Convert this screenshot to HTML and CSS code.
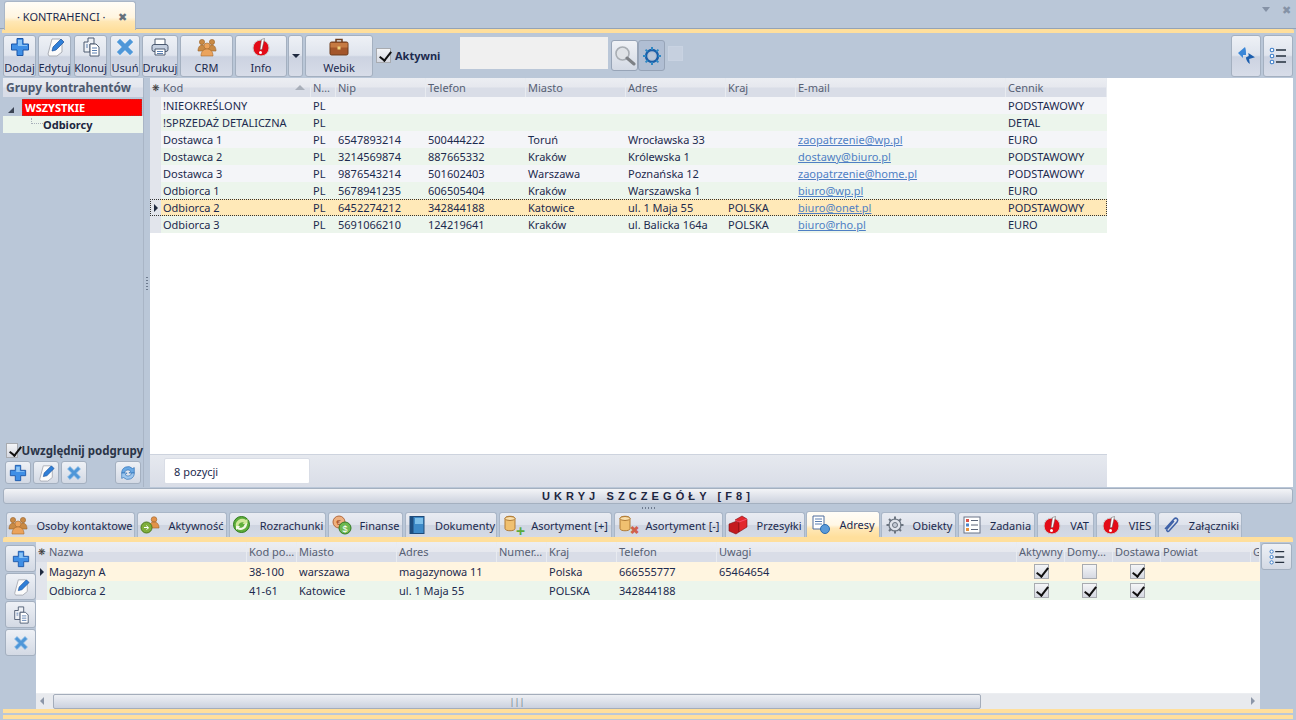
FILE: index.html
```html
<!DOCTYPE html>
<html lang="pl">
<head>
    <meta charset="UTF-8">
    <title>Kontrahenci</title>
    <link rel="stylesheet" href="styles.css">
</head>
<body>
    <svg class="sprites" width="0" height="0">
        <defs>
            <symbol id="i-plus" viewBox="0 0 20 20"><path d="M7 1.5h6v5.500h5.500v6H13v5.500H7V13H1.500V7H7z" fill="#3f8fe6" stroke="#1c57a8"/><path d="M8 3h4v5h5v1H8z" fill="#8cc4f6"/></symbol>
            <symbol id="i-edit" viewBox="0 0 20 20"><path d="M7 2h8l2 2v11l-5 4H4l-1-2z" fill="#fbfbfb" stroke="#a9adb5"/><path d="M7 14l1-4 8-8 3 3-8 8z" fill="#2f7fd8" stroke="#1b4f96" stroke-width=".7"/></symbol>
            <symbol id="i-clone" viewBox="0 0 20 20"><path d="M3 5h4V1h6v6H9v8H3z" fill="#eef1f6" stroke="#4c5a70"/><path d="M9 7h6l3 3v9H9z" fill="#fff" stroke="#4c5a70"/><path d="M11 11h5M11 13.500h5M11 16h5M5 8h2M5 10h2" stroke="#5b7fb0"/></symbol>
            <symbol id="i-del" viewBox="0 0 20 20"><path d="M5 2l5 5 5-5 3 3-5 5 5 5-3 3-5-5-5 5-3-3 5-5-5-5z" fill="#4f97d8" stroke="#7fb6e6" stroke-linejoin="round"/></symbol>
            <symbol id="i-print" viewBox="0 0 20 20"><path d="M5 2h10v6H5z" fill="#fff" stroke="#4c5a70"/><rect x="2" y="7.500" width="16" height="7" rx="2" fill="#c6d0e0" stroke="#4c5a70"/><path d="M5 12h10v6H5z" fill="#fff" stroke="#4c5a70"/><path d="M7 14.500h6M7 16.500h6" stroke="#5b7fb0"/></symbol>
            <symbol id="i-people" viewBox="0 0 20 20"><g fill="#c98a45" stroke="#9a6226" stroke-width=".6"><circle cx="5" cy="5" r="2.600"/><circle cx="15" cy="5" r="2.600"/><path d="M1 14c0-4 2-6 4-6s4 2 4 6zM11 14c0-4 2-6 4-6s4 2 4 6z"/></g><circle cx="10" cy="9" r="3" fill="#eba35c" stroke="#a66a2c" stroke-width=".6"/><path d="M4 19c0-5 3-7 6-7s6 2 6 7z" fill="#eba35c" stroke="#a66a2c" stroke-width=".6"/></symbol>
            <symbol id="i-info" viewBox="0 0 20 20"><circle cx="10" cy="11" r="8" fill="#e30b17" stroke="#c9c9c9"/><path d="M10.500 2.500l3-1-2.500 11-2 .2z" fill="#fff" stroke="#555" stroke-width=".5"/><circle cx="9.500" cy="15.500" r="1.500" fill="#fff"/></symbol>
            <symbol id="i-case" viewBox="0 0 20 20"><path d="M7 5V2.500h6V5" fill="none" stroke="#6d3d1d" stroke-width="1.500"/><rect x="1" y="5" width="18" height="13" rx="1.500" fill="#a4562a" stroke="#6d3d1d"/><path d="M1.500 6h17v4.500h-17z" fill="#c67a42"/><rect x="8.500" y="9.500" width="3" height="3" fill="#f0d27c"/></symbol>
            <symbol id="i-swap" viewBox="0 0 20 20"><path d="M9 1L2 7l5 5V9h3c0-3 0-6-1-8z" fill="#3b87d8"/><path d="M13 18c-2-2-3-4-3-7l3-1V7l6 5-6 1z" fill="#1d5fae" transform="rotate(-8 13 12)"/></symbol>
            <symbol id="i-list" viewBox="0 0 20 20"><g fill="#fff" stroke="#3f7fc8" stroke-width="1.100"><circle cx="4" cy="4" r="1.800"/><circle cx="4" cy="10" r="1.800"/><circle cx="4" cy="16" r="1.800"/></g><path d="M8 4h10M8 10h10M8 16h10" stroke="#25303f" stroke-width="1.400"/></symbol>
            <symbol id="i-sync" viewBox="0 0 20 20"><path d="M3 10a7 7 0 0 1 12-5l2-1v6h-6l2-2a4 4 0 0 0-7 2z" fill="#6aa9e4" stroke="#2b6cb4" stroke-width=".7"/><path d="M17 10a7 7 0 0 1-12 5l-2 1v-6h6l-2 2a4 4 0 0 0 7-2z" fill="#9cc6ee" stroke="#2b6cb4" stroke-width=".7"/></symbol>
            <symbol id="i-search" viewBox="0 0 22 22"><circle cx="8.500" cy="8.500" r="6.500" fill="#dfe2e6" stroke="#a8adb3" stroke-width="1.600"/><path d="M13 13l7 6" stroke="#7d8085" stroke-width="3" stroke-linecap="round"/></symbol>
            <symbol id="i-gear" viewBox="0 0 20 20"><circle cx="10" cy="10" r="6" fill="none" stroke="#1a5ea8" stroke-width="2.400"/><circle cx="10" cy="10" r="3.500" fill="#b9c6d8"/><path d="M10 1v3M10 16v3M1 10h3M16 10h3M3.600 3.600l2 2M14.400 14.400l2 2M16.400 3.600l-2 2M5.600 14.400l-2 2" stroke="#2f88c4" stroke-width="2"/></symbol>
            <symbol id="i-activity" viewBox="0 0 20 20"><circle cx="14" cy="4.500" r="2.800" fill="#e2924a" stroke="#9a6226" stroke-width=".6"/><path d="M9 13c0-4 2-6 5-6s5 2 5 6z" fill="#e2924a" stroke="#9a6226" stroke-width=".6"/><circle cx="6.500" cy="12.500" r="5.500" fill="#7fae3c" stroke="#4d7a1e"/><path d="M4 12.500h4l-1.500-2M9 12.500l-2.500 2" stroke="#fff" fill="none"/></symbol>
            <symbol id="i-money" viewBox="0 0 20 20"><circle cx="9.500" cy="9.500" r="8" fill="#5fae3c" stroke="#2f7a1c"/><path d="M4 12a6.500 6.500 0 0 1 10-7l1.500-1v5h-5l1.500-1.500A4 4 0 0 0 6.500 12z" fill="#cfe89a"/><path d="M15 8a6.500 6.500 0 0 1-10 6l-1 1v-4h4l-1 1.500a4 4 0 0 0 5.500-3z" fill="#f4f8e8"/></symbol>
            <symbol id="i-coins" viewBox="0 0 20 20"><circle cx="7" cy="7" r="6" fill="#eeb080" stroke="#b2683c"/><text x="4.200" y="10" font-size="8" fill="#a04a20" font-family="Liberation Sans">€</text><circle cx="13" cy="13" r="6" fill="#6cb850" stroke="#327a24"/><text x="10.500" y="16.500" font-size="9" fill="#fff" font-family="Liberation Sans">$</text></symbol>
            <symbol id="i-book" viewBox="0 0 20 20"><rect x="3" y="1.500" width="14" height="17" fill="#3d8ac8" stroke="#1f4a78"/><rect x="3" y="1.500" width="3.500" height="17" fill="#1e4e80"/><path d="M8 3h8v6H8z" fill="#7ec0ea"/></symbol>
            <symbol id="i-can" viewBox="0 0 20 20"><path d="M2 3.500c0-3 10-3 10 0v10c0 3-10 3-10 0z" fill="#f0c070" stroke="#b07a34"/><ellipse cx="7" cy="3.500" rx="5" ry="2" fill="#fae0ac" stroke="#b07a34"/></symbol>
            <symbol id="i-box" viewBox="0 0 20 20"><path d="M1 9l8-3 2 1v10l-3 2-7-3z" fill="#c41a1e" stroke="#7d0e12" stroke-width=".6"/><path d="M7 5l7-4 5 3v8l-8 5V7z" fill="#e2282c" stroke="#7d0e12" stroke-width=".6"/><path d="M7 5l4 2 8-3" fill="none" stroke="#f57" stroke-width=".8"/></symbol>
            <symbol id="i-addr" viewBox="0 0 20 20"><path d="M2 1h11v13H2z" fill="#fff" stroke="#4f6c9c"/><path d="M4 4h7M4 6.500h7M4 9h7" stroke="#5b7fb0"/><circle cx="14" cy="14" r="4.500" fill="#5a9ad8" stroke="#2c6cb0"/></symbol>
            <symbol id="i-cog" viewBox="0 0 20 20"><circle cx="10" cy="10" r="6" fill="#dfe3ea" stroke="#6b7480" stroke-width="1.200"/><circle cx="10" cy="10" r="2.500" fill="#c4cbd5" stroke="#6b7480"/><path d="M10 1.500v3M10 15.500v3M1.500 10h3M15.500 10h3M4 4l2 2M14 14l2 2M16 4l-2 2M6 14l-2 2" stroke="#6b7480" stroke-width="2"/></symbol>
            <symbol id="i-task" viewBox="0 0 20 20"><rect x="2" y="2" width="16" height="16" fill="#fff" stroke="#6a7488"/><rect x="4" y="4" width="3" height="3" fill="#d9534a"/><rect x="4" y="8.500" width="3" height="3" fill="#4c86cc"/><rect x="4" y="13" width="3" height="3" fill="#e8923c"/><path d="M9 5.500h7M9 10h7M9 14.500h7" stroke="#5a6478"/></symbol>
            <symbol id="i-clip" viewBox="0 0 20 20"><path d="M4 14L13 4c2-2 5 0 3 3l-8 9c-1 1-3 0-2-2l7-8" fill="none" stroke="#3f62a8" stroke-width="1.500"/></symbol>
        </defs>
    </svg>

    <div class="doc-tabs">
        <div class="doc-tab">
            <span>· KONTRAHENCI ·</span>
            <span class="doc-close">✖</span>
        </div>
        <div class="window-controls">
            <span class="wc-arrow"></span>
            <span class="wc-close">✖</span>
        </div>
    </div>
    <div class="stripe"></div>

    <div class="toolbar">
        <button class="tbtn w33"><svg class="ic"><use href="#i-plus"/></svg>Dodaj</button>
        <button class="tbtn w33 g2"><svg class="ic"><use href="#i-edit"/></svg>Edytuj</button>
        <button class="tbtn w33 g3"><svg class="ic"><use href="#i-clone"/></svg>Klonuj</button>
        <button class="tbtn w30 g3"><svg class="ic"><use href="#i-del"/></svg>Usuń</button>
        <button class="tbtn w36 g2"><svg class="ic"><use href="#i-print"/></svg>Drukuj</button>
        <button class="tbtn w53 g2"><svg class="ic"><use href="#i-people"/></svg>CRM</button>
        <button class="tbtn w52 g2"><svg class="ic"><use href="#i-info"/></svg>Info</button>
        <button class="tbtn w15 g1"><span class="caret"></span></button>
        <button class="tbtn w68 g2"><svg class="ic"><use href="#i-case"/></svg>Webik</button>
        <label class="active-check"><span class="check on"></span>Aktywni</label>
        <div class="search-box"></div>
        <button class="sbtn"><svg class="ic22"><use href="#i-search"/></svg></button>
        <button class="sbtn sbtn-on"><svg class="ic20"><use href="#i-gear"/></svg></button>
        <div class="small-box"></div>
        <div class="toolbar-right">
            <button class="tbtn w30"><svg class="ic"><use href="#i-swap"/></svg></button>
            <button class="tbtn w30"><svg class="ic"><use href="#i-list"/></svg></button>
        </div>
    </div>

    <div class="main">
        <aside class="groups">
            <div class="groups-head">Grupy kontrahentów</div>
            <div class="tree">
                <div class="tree-root"><span class="tree-arrow"></span><span class="tree-sel">WSZYSTKIE</span></div>
                <div class="tree-child"><span class="tree-line"></span>Odbiorcy</div>
            </div>
            <label class="sub-check"><span class="check on"></span>Uwzględnij podgrupy</label>
            <div class="groups-btns">
                <button class="gbtn"><svg class="ic"><use href="#i-plus"/></svg></button>
                <button class="gbtn"><svg class="ic"><use href="#i-edit"/></svg></button>
                <button class="gbtn"><svg class="ic16"><use href="#i-del"/></svg></button>
                <button class="gbtn gbtn-end"><svg class="ic"><use href="#i-sync"/></svg></button>
            </div>
        </aside>
        <div class="vsplit"><span></span></div>
        <section class="grid-top">
            <div class="up-row up-head">
                <div class="hd star">❋</div>
                <div class="hd sort">Kod<span class="sort-arrow"></span></div>
                <div class="hd">N…</div>
                <div class="hd">Nip</div>
                <div class="hd">Telefon</div>
                <div class="hd">Miasto</div>
                <div class="hd">Adres</div>
                <div class="hd">Kraj</div>
                <div class="hd">E-mail</div>
                <div class="hd">Cennik</div>
            </div>
            <div class="up-row"><div class="rh"></div><div>!NIEOKREŚLONY</div><div>PL</div><div></div><div></div><div></div><div></div><div></div><div></div><div>PODSTAWOWY</div></div>
            <div class="up-row alt"><div class="rh"></div><div>!SPRZEDAŻ DETALICZNA</div><div>PL</div><div></div><div></div><div></div><div></div><div></div><div></div><div>DETAL</div></div>
            <div class="up-row"><div class="rh"></div><div>Dostawca 1</div><div>PL</div><div>6547893214</div><div>500444222</div><div>Toruń</div><div>Wrocławska 33</div><div></div><div><a>zaopatrzenie@wp.pl</a></div><div>EURO</div></div>
            <div class="up-row alt"><div class="rh"></div><div>Dostawca 2</div><div>PL</div><div>3214569874</div><div>887665332</div><div>Kraków</div><div>Królewska 1</div><div></div><div><a>dostawy@biuro.pl</a></div><div>PODSTAWOWY</div></div>
            <div class="up-row"><div class="rh"></div><div>Dostawca 3</div><div>PL</div><div>9876543214</div><div>501602403</div><div>Warszawa</div><div>Poznańska 12</div><div></div><div><a>zaopatrzenie@home.pl</a></div><div>PODSTAWOWY</div></div>
            <div class="up-row alt"><div class="rh"></div><div>Odbiorca 1</div><div>PL</div><div>5678941235</div><div>606505404</div><div>Kraków</div><div>Warszawska 1</div><div></div><div><a>biuro@wp.pl</a></div><div>EURO</div></div>
            <div class="up-row current"><div class="rh"><span class="row-mark"></span></div><div>Odbiorca 2</div><div>PL</div><div>6452274212</div><div>342844188</div><div>Katowice</div><div>ul. 1 Maja 55</div><div>POLSKA</div><div><a>biuro@onet.pl</a></div><div>PODSTAWOWY</div></div>
            <div class="up-row alt"><div class="rh"></div><div>Odbiorca 3</div><div>PL</div><div>5691066210</div><div>124219641</div><div>Kraków</div><div>ul. Balicka 164a</div><div>POLSKA</div><div><a>biuro@rho.pl</a></div><div>EURO</div></div>
            <div class="grid-fill"></div>
            <div class="grid-status"><div class="count">8 pozycji</div></div>
        </section>
        <div class="white-side"></div>
    </div>

    <div class="hide-bar">UKRYJ SZCZEGÓŁY [F8]</div>
    <div class="hsplit"><span></span></div>

    <div class="detail-tabs">
        <div class="dtab t129"><svg class="ic"><use href="#i-people"/></svg>Osoby kontaktowe</div>
        <div class="dtab t90"><svg class="ic"><use href="#i-activity"/></svg>Aktywność</div>
        <div class="dtab t97"><svg class="ic"><use href="#i-money"/></svg>Rozrachunki</div>
        <div class="dtab t75"><svg class="ic"><use href="#i-coins"/></svg>Finanse</div>
        <div class="dtab t92"><svg class="ic"><use href="#i-book"/></svg>Dokumenty</div>
        <div class="dtab t113"><span class="stack"><svg class="ic"><use href="#i-can"/></svg><b class="mini-plus">+</b></span>Asortyment [+]</div>
        <div class="dtab t109"><span class="stack"><svg class="ic"><use href="#i-can"/></svg><b class="mini-x">✖</b></span>Asortyment [-]</div>
        <div class="dtab t80"><svg class="ic"><use href="#i-box"/></svg>Przesyłki</div>
        <div class="dtab t74 dtab-on"><svg class="ic"><use href="#i-addr"/></svg>Adresy</div>
        <div class="dtab t75"><svg class="ic"><use href="#i-cog"/></svg>Obiekty</div>
        <div class="dtab t77"><svg class="ic"><use href="#i-task"/></svg>Zadania</div>
        <div class="dtab t57"><svg class="ic"><use href="#i-info"/></svg>VAT</div>
        <div class="dtab t60"><svg class="ic"><use href="#i-info"/></svg>VIES</div>
        <div class="dtab t84"><svg class="ic"><use href="#i-clip"/></svg>Załączniki</div>
    </div>
    <div class="stripe stripe-detail"></div>

    <div class="detail">
        <div class="side-btns">
            <button class="vbtn"><svg class="ic"><use href="#i-plus"/></svg></button>
            <button class="vbtn"><svg class="ic"><use href="#i-edit"/></svg></button>
            <button class="vbtn"><svg class="ic"><use href="#i-clone"/></svg></button>
            <button class="vbtn"><svg class="ic16"><use href="#i-del"/></svg></button>
        </div>
        <section class="grid-low">
            <div class="lo-row lo-head">
                <div class="hd star">❋</div>
                <div class="hd">Nazwa</div>
                <div class="hd">Kod po…</div>
                <div class="hd">Miasto</div>
                <div class="hd">Adres</div>
                <div class="hd">Numer…</div>
                <div class="hd">Kraj</div>
                <div class="hd">Telefon</div>
                <div class="hd">Uwagi</div>
                <div class="hd">Aktywny</div>
                <div class="hd">Domy…</div>
                <div class="hd">Dostawa</div>
                <div class="hd">Powiat</div>
                <div class="hd">G</div>
            </div>
            <div class="lo-row lo-current"><div class="rh"><span class="row-mark"></span></div><div>Magazyn A</div><div>38-100</div><div>warszawa</div><div>magazynowa 11</div><div></div><div>Polska</div><div>666555777</div><div>65464654</div><div class="cc"><span class="check on"></span></div><div class="cc"><span class="check"></span></div><div class="cc"><span class="check on"></span></div><div></div><div></div></div>
            <div class="lo-row lo-alt"><div class="rh"></div><div>Odbiorca 2</div><div>41-61</div><div>Katowice</div><div>ul. 1 Maja 55</div><div></div><div>POLSKA</div><div>342844188</div><div></div><div class="cc"><span class="check on"></span></div><div class="cc"><span class="check on"></span></div><div class="cc"><span class="check on"></span></div><div></div><div></div></div>
            <div class="grid-fill"></div>
            <div class="hscroll">
                <span class="sc-arrow sc-left"></span>
                <div class="sc-track">
                    <div class="sc-thumb"><span class="sc-grip">|||</span></div>
                </div>
                <span class="sc-arrow sc-right"></span>
            </div>
        </section>
        <div class="side-right">
            <button class="vbtn vbtn-r"><svg class="ic"><use href="#i-list"/></svg></button>
        </div>
    </div>
    <div class="stripe stripe-bottom"></div>
    <div class="stripe stripe-last"></div>
</body>
</html>
```

FILE: styles.css
```css
* {
    box-sizing: border-box;
}

html, body {
    height: 100%;
}

body {
    margin: 0;
    width: 1296px;
    height: 720px;
    overflow: hidden;
    background-color: #bac7d8;
    font-family: "Noto Sans", "Liberation Sans", sans-serif;
    font-size: 11px;
    color: #1c2a4e;
}

.sprites {
    position: absolute;
}

button {
    font: inherit;
    color: inherit;
    padding: 0;
}

.ic { width: 20px; height: 20px; flex: none; }
.ic16 { width: 16px; height: 16px; flex: none; }
.ic20 { width: 20px; height: 20px; }
.ic22 { width: 22px; height: 22px; }

/* Document tabs */
.doc-tabs {
    height: 29px;
    display: flex;
    border-bottom: 1px solid #94a3b6;
    padding-left: 4px;
}

.doc-tab {
    width: 132px;
    height: 29px;
    margin-top: 1px;
    padding-left: 12px;
    display: flex;
    align-items: center;
    gap: 13px;
    background: linear-gradient(#fffdf7 0%, #fff5e0 55%, #ffe7b4 70%, #ffdf9c 100%);
    border: 1px solid #a9b6c7;
    border-bottom: 0;
    border-radius: 3px 3px 0 0;
}

.doc-close {
    color: #66707c;
    font-size: 11px;
}

.window-controls {
    margin-left: auto;
    margin-right: 5px;
    display: flex;
    align-items: center;
    gap: 12px;
    height: 18px;
}

.wc-arrow {
    border: 4px solid transparent;
    border-top: 5px solid #8592a6;
    border-left-width: 4px;
    margin-top: 5px;
}

.wc-close {
    color: #8592a6;
    font-size: 11px;
}

.stripe {
    height: 4px;
    margin: 0 2px;
    background-color: #ffdf9c;
    border-radius: 2px 2px 0 0;
}

/* Main toolbar */
.toolbar {
    height: 45px;
    padding: 2px 3px 1px;
    display: flex;
    align-items: flex-start;
}

.tbtn {
    height: 42px;
    display: flex;
    flex-direction: column;
    align-items: center;
    justify-content: center;
    gap: 3px;
    background: linear-gradient(#eef1f6 0%, #dfe4ed 48%, #ccd3e1 52%, #d7dce8 100%);
    border: 1px solid #a4b0c0;
    border-radius: 3px;
    flex: none;
    white-space: nowrap;
}

.w15 { width: 15px; }
.w30 { width: 30px; }
.w33 { width: 33px; }
.w36 { width: 36px; }
.w52 { width: 52px; }
.w53 { width: 53px; }
.w68 { width: 68px; }
.g1 { margin-left: 1px; }
.g2 { margin-left: 2px; }
.g3 { margin-left: 3px; }

.caret {
    border: 4px solid transparent;
    border-top: 4px solid #1f2a40;
    border-bottom: 0;
}

.active-check {
    display: flex;
    align-items: center;
    gap: 4px;
    margin: 13px 0 0 3px;
    font-weight: 700;
    font-size: 11px;
    height: 15px;
}

.check {
    display: inline-block;
    position: relative;
    width: 15px;
    height: 15px;
    border: 1px solid #a8abb0;
    background: linear-gradient(#f4f5f7, #d6d9e2);
}

.check.on::after {
    content: "";
    position: absolute;
    left: 4.5px;
    top: 0;
    width: 5px;
    height: 10px;
    border: solid #111;
    border-width: 0 2px 2px 0;
    transform: rotate(38deg);
}

.search-box {
    width: 148px;
    height: 32px;
    margin: 2px 0 0 20px;
    background-color: #f0f0f0;
}

.sbtn {
    width: 27px;
    height: 31px;
    margin: 5px 0 0;
    display: flex;
    align-items: center;
    justify-content: center;
    background: linear-gradient(#f0f2f6, #d3d9e4);
    border: 1px solid #97a4b7;
    border-radius: 3px;
}

.sbtn:first-of-type {
    margin-left: 3px;
}

.search-box + .sbtn {
    margin-left: 3px;
}

.sbtn-on {
    background: #b0bed3;
}

.small-box {
    width: 15px;
    height: 15px;
    margin: 11px 0 0 3px;
    background-color: #c6d0df;
    border: 1px solid #c9d3e2;
}

.toolbar-right {
    margin-left: auto;
    display: flex;
    gap: 2px;
}

/* Groups and contractors */
.main {
    height: 409px;
    margin: 0 3px;
    display: flex;
}

.groups {
    width: 141px;
    display: flex;
    flex-direction: column;
    border-right: 1px solid #a9b5c6;
}

.groups-head {
    height: 19px;
    padding-left: 3px;
    display: flex;
    align-items: center;
    font-weight: 700;
    font-size: 12px;
    color: #4d596e;
    background: linear-gradient(#e9ecf2 0%, #e4e7ee 48%, #d8dde8 52%, #d9dde8 100%);
}

.tree {
    flex: 1;
}

.tree-root {
    height: 18px;
    margin-top: 1px;
    display: flex;
    align-items: center;
}

.tree-arrow {
    width: 0;
    height: 0;
    margin: 5px 6px 0 5px;
    border-style: solid;
    border-width: 0 0 6px 6px;
    border-color: transparent transparent #3b4454 transparent;
    flex: none;
}

.tree-sel {
    flex: 1;
    height: 17px;
    margin-left: 2px;
    margin-right: 1px;
    padding-left: 2px;
    line-height: 16px;
    background-color: #ff0000;
    color: #fff;
    font-weight: 700;
    border: 1px dotted #a33;
}

.tree-child {
    height: 17px;
    display: flex;
    align-items: center;
    background-color: #ecf5ec;
    font-weight: 700;
    color: #1d2540;
    padding-left: 28px;
}

.tree-line {
    width: 12px;
    height: 6px;
    margin: -8px 0 0 0;
    border-bottom: 1px dotted #a9b0ba;
    border-left: 1px dotted #a9b0ba;
}

.sub-check {
    display: flex;
    align-items: center;
    gap: 3px;
    padding-left: 3px;
    font-weight: 700;
    color: #2a3447;
    height: 15px;
    white-space: nowrap;
    font-size: 11.5px;
}

.groups-btns {
    height: 29px;
    padding: 3px 2px;
    display: flex;
    gap: 2px;
}

.gbtn {
    width: 26px;
    height: 23px;
    display: flex;
    align-items: center;
    justify-content: center;
    background: linear-gradient(#eef1f6, #d3d9e4);
    border: 1px solid #a4b0c0;
    border-radius: 3px;
}

.gbtn .ic {
    width: 18px;
    height: 18px;
}

.gbtn-end {
    margin-left: auto;
}

.vsplit {
    width: 6px;
    display: flex;
    align-items: center;
    justify-content: center;
    background-color: #bac7d8;
}

.vsplit span {
    width: 2px;
    height: 14px;
    background-image: radial-gradient(#6d7a8e 45%, transparent 50%);
    background-size: 2px 3px;
}

/* Contractors grid */
.grid-top {
    width: 957px;
    display: flex;
    flex-direction: column;
    background-color: #fff;
}

.white-side {
    flex: 1;
    background-color: #fff;
}

.up-row {
    height: 17px;
    display: grid;
    grid-template-columns: 11px 150px 25px 90px 100px 100px 100px 70px 210px 101px;
    background-color: #f4f5f8;
    line-height: 17px;
    white-space: nowrap;
}

.up-row > div {
    padding-left: 2px;
    overflow: hidden;
}

.up-row.alt {
    background-color: #ecf5ec;
}

.up-row.current {
    background-color: #ffe9b8;
    outline: 1px dotted #333;
    outline-offset: -1px;
}

.up-head {
    height: 19px;
    line-height: 19px;
    background: none;
}

.hd {
    padding-left: 2px;
    color: #566074;
    background: linear-gradient(#eceef3 0%, #e6e8ee 48%, #d9dde7 52%, #d9dde7 100%);
    border-right: 1px solid #e8ebf0;
    overflow: hidden;
    white-space: nowrap;
}

.hd.star {
    padding: 0;
    text-align: center;
    font-size: 9px;
    color: #333;
    border-right: 0;
}

.hd.sort {
    position: relative;
}

.sort-arrow {
    position: absolute;
    right: 5px;
    top: 7px;
    border: 5px solid transparent;
    border-top: 0;
    border-bottom: 5px solid #a9afba;
}

.up-row > .rh, .lo-row > .rh {
    padding: 0;
    background-color: #e2e5ec;
    display: flex;
    align-items: center;
    justify-content: center;
}

.row-mark {
    border: 4px solid transparent;
    border-left: 4px solid #1f2a40;
    border-right: 0;
}

a {
    color: #4f7fc4;
    text-decoration: underline;
}

.grid-fill {
    flex: 1;
    background-color: #fff;
}

.grid-status {
    height: 33px;
    padding: 3px 0 4px 14px;
    background: linear-gradient(#e6e9ef, #d9dde7);
    border-top: 1px solid #cdd3de;
}

.count {
    width: 146px;
    height: 26px;
    padding-left: 9px;
    line-height: 26px;
    background-color: #fff;
    border: 1px solid #d9dde6;
    border-radius: 2px;
}

/* Hide details bar */
.hide-bar {
    height: 16px;
    margin: 1px 3px 0;
    background: linear-gradient(#f3f4f7, #ccd2de);
    border: 1px solid #a4b0c0;
    border-radius: 3px;
    text-align: center;
    line-height: 14px;
    font-family: "Liberation Sans", sans-serif;
    font-weight: 700;
    font-size: 11px;
    letter-spacing: 4.1px;
    color: #1d2540;
}

.hsplit {
    height: 7px;
    display: flex;
    align-items: center;
    justify-content: center;
}

.hsplit span {
    width: 14px;
    height: 2px;
    margin-top: 1px;
    background-image: radial-gradient(#6d7a8e 45%, transparent 50%);
    background-size: 3px 2px;
}

/* Detail tabs */
.detail-tabs {
    height: 26px;
    padding-left: 6px;
    display: flex;
    gap: 2px;
}

.dtab {
    height: 25px;
    margin-top: 1px;
    display: flex;
    align-items: center;
    justify-content: center;
    gap: 8px;
    font-size: 11px;
    white-space: nowrap;
    background: linear-gradient(#e9ecf2 0%, #dfe3ec 48%, #cfd5e1 52%, #d5dae5 100%);
    border: 1px solid #a9b6c7;
    border-bottom: 0;
    border-radius: 3px 3px 0 0;
    flex: none;
}

.dtab-on {
    height: 26px;
    margin: 0 -1px;
    background: linear-gradient(#fffdf7 0%, #fff7e6 52%, #ffe8b8 65%, #ffdf9c 100%);
}

.t57 { width: 57px; }
.t60 { width: 60px; }
.t74 { width: 74px; }
.t75 { width: 75px; }
.t77 { width: 77px; }
.t80 { width: 80px; }
.t84 { width: 84px; }
.t90 { width: 90px; }
.t92 { width: 92px; }
.t97 { width: 97px; }
.t109 { width: 109px; }
.t113 { width: 113px; }
.t129 { width: 129px; }

.stack {
    position: relative;
    width: 20px;
    height: 20px;
}

.mini-plus {
    position: absolute;
    right: -2px;
    bottom: -2px;
    color: #5cab3c;
    font-size: 16px;
    line-height: 12px;
}

.mini-x {
    position: absolute;
    right: -1px;
    bottom: 0;
    color: #d0604a;
    font-size: 11px;
    line-height: 11px;
}

.stripe-detail {
    height: 5px;
    margin: 0 3px;
    border-radius: 2px 2px 0 0;
}

/* Detail area */
.detail {
    height: 167px;
    margin: 0 3px;
    display: flex;
}

.side-btns {
    width: 33px;
    padding: 3px 2px 0;
    display: flex;
    flex-direction: column;
    gap: 1px;
}

.side-right {
    width: 33px;
    padding-top: 1px;
}

.vbtn {
    width: 31px;
    height: 27px;
    display: flex;
    align-items: center;
    justify-content: center;
    background: linear-gradient(#eef1f6, #d3d9e4);
    border: 1px solid #a4b0c0;
    border-radius: 3px;
}

.vbtn .ic {
    width: 18px;
    height: 18px;
}

.vbtn-r {
    height: 27px;
    margin-left: 1px;
}

.grid-low {
    width: 1224px;
    display: flex;
    flex-direction: column;
    background-color: #fff;
}

.lo-row {
    height: 19px;
    display: grid;
    grid-template-columns: 11px 200px 50px 100px 100px 50px 70px 100px 300px 48px 48px 48px 90px 9px;
    line-height: 19px;
    white-space: nowrap;
}

.lo-row > div {
    padding-left: 2px;
    overflow: hidden;
}

.lo-head {
    height: 20px;
    line-height: 20px;
}

.lo-current {
    background-color: #fff5e0;
}

.lo-alt {
    background-color: #ecf5ec;
}

.lo-row > .cc {
    padding: 0;
    display: flex;
    align-items: center;
    justify-content: center;
}

/* Horizontal scrollbar */
.hscroll {
    height: 16px;
    display: flex;
    background-color: #e8eaee;
    border-top: 1px solid #eceef1;
}

.sc-arrow {
    width: 17px;
    flex: none;
    position: relative;
}

.sc-arrow::after {
    content: "";
    position: absolute;
    top: 3px;
    border: 4px solid transparent;
}

.sc-left::after {
    left: 4px;
    border-right: 4px solid #8d97a8;
    border-left: 0;
}

.sc-right::after {
    right: 5px;
    border-left: 4px solid #8d97a8;
    border-right: 0;
}

.sc-track {
    flex: 1;
}

.sc-thumb {
    width: 928px;
    height: 15px;
    border: 1px solid #a4adbb;
    border-radius: 2px;
    background: linear-gradient(#eef0f4, #cbd1df);
    text-align: center;
    line-height: 13px;
    font-size: 9px;
    color: #6d7a8e;
}

.stripe-bottom {
    height: 4px;
    margin: 0 3px;
    border-radius: 0;
}

.stripe-last {
    height: 4px;
    margin: 2px 3px 0;
    border-radius: 0;
}
```
